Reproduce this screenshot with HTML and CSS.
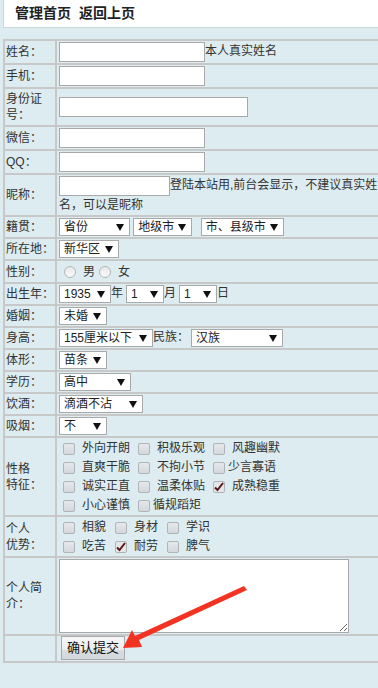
FILE: index.html
```html
<!DOCTYPE html>
<html lang="zh-CN">
<head>
    <meta charset="UTF-8">
    <meta name="viewport" content="width=device-width, initial-scale=1.0">
    <title>会员资料</title>
    <link rel="stylesheet" href="styles.css">
</head>
<body>
    <div class="topbar">
        <a href="#">管理首页</a>
        <a href="#">返回上页</a>
    </div>
    <form class="profile-form">
        <table class="form-table">
            <tr>
                <td class="label">姓名：</td>
                <td><input type="text" class="txt">本人真实姓名</td>
            </tr>
            <tr>
                <td class="label">手机：</td>
                <td><input type="text" class="txt"></td>
            </tr>
            <tr>
                <td class="label">身份证号：</td>
                <td><input type="text" class="txt wide"></td>
            </tr>
            <tr>
                <td class="label">微信：</td>
                <td><input type="text" class="txt"></td>
            </tr>
            <tr>
                <td class="label">QQ：</td>
                <td><input type="text" class="txt"></td>
            </tr>
            <tr>
                <td class="label">昵称：</td>
                <td class="note"><input type="text" class="txt short">登陆本站用,前台会显示，不建议真实姓名，可以是昵称</td>
            </tr>
            <tr>
                <td class="label">籍贯：</td>
                <td>
                    <select class="sel w71"><option>省份</option></select>
                    <select class="sel w59"><option>地级市</option></select>
                    <select class="sel w83"><option>市、县级市</option></select>
                </td>
            </tr>
            <tr>
                <td class="label">所在地：</td>
                <td><select class="sel w60"><option>新华区</option></select></td>
            </tr>
            <tr>
                <td class="label">性别：</td>
                <td class="radios">
                    <label><input type="radio" name="sex"> 男</label><label><input type="radio" name="sex"> 女</label>
                </td>
            </tr>
            <tr>
                <td class="label">出生年：</td>
                <td><select class="sel w52"><option>1935</option></select>年<select class="sel w38"><option>1</option></select>月<select class="sel w38"><option>1</option></select>日</td>
            </tr>
            <tr>
                <td class="label">婚姻：</td>
                <td><select class="sel w48"><option>未婚</option></select></td>
            </tr>
            <tr>
                <td class="label">身高：</td>
                <td><select class="sel w94"><option>155厘米以下</option></select>民族：<select class="sel w92"><option>汉族</option></select></td>
            </tr>
            <tr>
                <td class="label">体形：</td>
                <td><select class="sel w48"><option>苗条</option></select></td>
            </tr>
            <tr>
                <td class="label">学历：</td>
                <td><select class="sel w72"><option>高中</option></select></td>
            </tr>
            <tr>
                <td class="label">饮酒：</td>
                <td><select class="sel w84"><option>滴酒不沾</option></select></td>
            </tr>
            <tr>
                <td class="label">吸烟：</td>
                <td><select class="sel w48"><option>不</option></select></td>
            </tr>
            <tr>
                <td class="label">性格<br>特征：</td>
                <td class="checks">
                    <div class="check-row">
                        <label class="c4"><input type="checkbox">外向开朗</label>
                        <label class="c4"><input type="checkbox">积极乐观</label>
                        <label class="c4"><input type="checkbox">风趣幽默</label>
                    </div>
                    <div class="check-row">
                        <label class="c4"><input type="checkbox">直爽干脆</label>
                        <label class="c4"><input type="checkbox">不拘小节</label>
                        <label class="c4 tight"><input type="checkbox">少言寡语</label>
                    </div>
                    <div class="check-row">
                        <label class="c4"><input type="checkbox">诚实正直</label>
                        <label class="c4"><input type="checkbox">温柔体贴</label>
                        <label class="c4"><input type="checkbox" checked>成熟稳重</label>
                    </div>
                    <div class="check-row">
                        <label class="c4"><input type="checkbox">小心谨慎</label>
                        <label class="c4 tight"><input type="checkbox">循规蹈矩</label>
                    </div>
                </td>
            </tr>
            <tr>
                <td class="label">个人<br>优势：</td>
                <td class="checks">
                    <div class="check-row">
                        <label class="c2"><input type="checkbox">相貌</label>
                        <label class="c2"><input type="checkbox">身材</label>
                        <label class="c2"><input type="checkbox">学识</label>
                    </div>
                    <div class="check-row">
                        <label class="c2"><input type="checkbox">吃苦</label>
                        <label class="c2"><input type="checkbox" checked>耐劳</label>
                        <label class="c2"><input type="checkbox">脾气</label>
                    </div>
                </td>
            </tr>
            <tr>
                <td class="label">个人简介：</td>
                <td><textarea class="intro"></textarea></td>
            </tr>
            <tr>
                <td class="label"></td>
                <td class="submit-cell"><button type="submit" class="btn">确认提交</button></td>
            </tr>
        </table>
    </form>
    <svg class="arrow" width="378" height="688" viewBox="0 0 378 688">
        <polygon points="244,586 247,590 139,640 142,647 123,648 132,630 135,636" fill="#f23322"/>
    </svg>
</body>
</html>
```

FILE: styles.css
```css
html, body {
    overflow: hidden;
}

body {
    margin: 0;
    background: #dcecf0;
    color: #333;
    font-family: "Liberation Sans", "Noto Sans CJK SC", sans-serif;
    font-size: 12px;
}

.topbar {
    margin-left: 3px;
    height: 24px;
    padding: 0 0 3px 11px;
    background: #fff;
    border-left: 1px solid #c9d6da;
    border-bottom: 1px solid #c9d6da;
    display: flex;
    align-items: center;
    gap: 8px;
}

.topbar a {
    color: #222;
    font-size: 14px;
    font-weight: bold;
    text-decoration: none;
}

.profile-form {
    margin: 11px 0 0 3px;
}

.form-table {
    width: 378px;
    border-collapse: collapse;
    border: 2px solid #c8c8c8;
}

.form-table td {
    border: 2px solid #c8c8c8;
    padding: 1px 0 1px 2px;
    line-height: 16px;
    vertical-align: middle;
}

.form-table td.label {
    width: 49px;
    padding: 2px 0 2px 1px;
    line-height: 16px;
}

.form-table td.note {
    line-height: 18px;
}

.txt {
    width: 146px;
    height: 20px;
    box-sizing: border-box;
    margin: 0;
    padding: 0 3px;
    border: 1px solid #a9a9a9;
    background: #fff;
    vertical-align: middle;
    font: inherit;
}

.txt.wide {
    width: 189px;
}

.txt.short {
    width: 111px;
}

.sel {
    height: 18px;
    box-sizing: border-box;
    margin: 0;
    padding: 0 12px 0 4px;
    border: 1px solid #a9a9a9;
    background: #fff url("data:image/svg+xml,%3Csvg xmlns='http://www.w3.org/2000/svg' width='8' height='7'%3E%3Cpolygon points='0,0 8,0 4,7' fill='%23111'/%3E%3C/svg%3E") no-repeat right 5px center;
    appearance: none;
    -webkit-appearance: none;
    border-radius: 0;
    color: #222;
    font: inherit;
    line-height: 16px;
    vertical-align: middle;
}

.w38 { width: 38px; }
.w48 { width: 48px; }
.w52 { width: 52px; }
.w59 { width: 59px; }
.w60 { width: 60px; }
.w71 { width: 71px; }
.w72 { width: 72px; }
.w83 { width: 83px; }
.w84 { width: 84px; }
.w92 { width: 92px; margin-left: 2px; }
.w94 { width: 94px; }

.w52 + .w38,
.w38 + .w38 { margin-left: 3px; }
.w59 + .w83 { margin-left: 5px; }

.radios {
    height: 19px;
}

.radios label {
    display: inline-flex;
    align-items: center;
    gap: 7px;
    margin-left: 5px;
    vertical-align: middle;
}

.radios label + label {
    margin-left: 4px;
}

input[type="radio"] {
    appearance: none;
    -webkit-appearance: none;
    width: 12px;
    height: 12px;
    margin: 0;
    border: 1px solid #b4b4b4;
    border-radius: 50%;
    background: linear-gradient(#e8e8e8, #fafafa);
}

.form-table td.checks {
    padding: 1px 0 0 2px;
}

.check-row {
    display: flex;
    height: 19px;
    align-items: center;
}

.check-row label {
    display: flex;
    align-items: center;
    gap: 7px;
    padding-left: 4px;
    line-height: 19px;
}

.check-row .c4 { width: 71px; }
.check-row .c2 { width: 48px; }
.check-row .c4.tight { gap: 3px; }

input[type="checkbox"] {
    appearance: none;
    -webkit-appearance: none;
    width: 12px;
    height: 12px;
    margin: 0;
    border: 1px solid #b0b4b8;
    border-radius: 2px;
    background: linear-gradient(#e6e8ea, #d4d8dc);
}

input[type="checkbox"]:checked {
    background: #e4e6e8 url("data:image/svg+xml,%3Csvg xmlns='http://www.w3.org/2000/svg' width='12' height='12'%3E%3Cpath d='M2 6.5 L4.5 9 L10 2' stroke='%235a1818' stroke-width='2' fill='none'/%3E%3C/svg%3E") no-repeat center;
}

.intro {
    width: 290px;
    height: 74px;
    box-sizing: border-box;
    margin: 0;
    border: 1px solid #a9a9a9;
    background: #fff;
    display: block;
    resize: both;
}

.form-table td.submit-cell {
    padding: 0 0 1px 4px;
}

.btn {
    width: 64px;
    height: 24px;
    margin: 0;
    padding: 0;
    border: 1px solid #a9a9a9;
    background: linear-gradient(#f7f7f7 0%, #ececec 60%, #d6dcdf 61%, #d2d8db 100%);
    color: #111;
    font: inherit;
    font-size: 13px;
    vertical-align: middle;
    cursor: pointer;
}

.arrow {
    position: absolute;
    left: 0;
    top: 0;
    pointer-events: none;
}
```
